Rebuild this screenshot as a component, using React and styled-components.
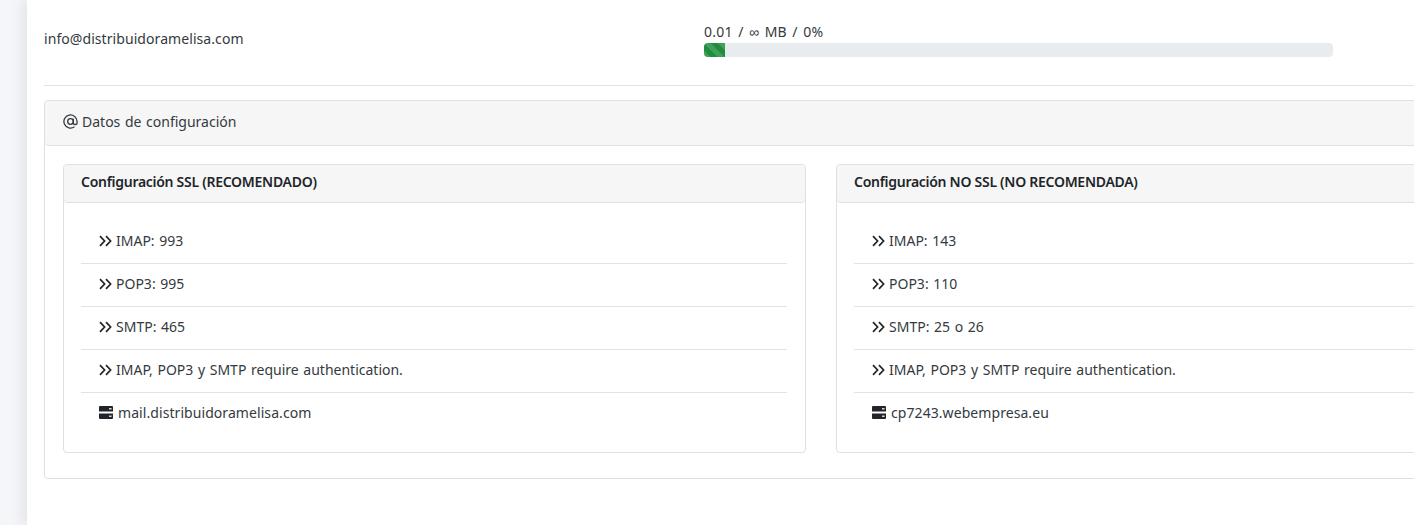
import React from "react";
import styled, { createGlobalStyle } from "styled-components";

const GlobalStyle = createGlobalStyle`
  html, body {
    margin: 0;
    padding: 0;
    height: 100%;
    overflow: hidden;
    background: #f4f5f8;
  }
  * {
    box-sizing: border-box;
  }
`;

const Page = styled.div`
  display: flex;
  width: 1414px;
  height: 525px;
  overflow: hidden;
`;

const Rail = styled.div`
  flex: 0 0 27px;
  background: #f5f6f9;
`;

const Main = styled.main`
  flex: 0 0 1570px;
  height: 525px;
  padding: 0 0 0 17px;
  background: #fff;
  box-shadow: -6px 0 10px rgba(90, 97, 105, 0.1);
  font-family: "Noto Sans", sans-serif;
  font-size: 14px;
  word-spacing: 1px;
  color: #343a40;
`;

const Account = styled.div`
  display: flex;
  height: 86px;
  border-bottom: 1px solid #e3e3e3;
`;

const Address = styled.div`
  flex: 0 0 660px;
  padding-top: 29px;
  line-height: 19px;
  letter-spacing: 0.07px;
`;

const Usage = styled.div`
  width: 629px;
  padding-top: 23px;
`;

const UsageText = styled.div`
  height: 20px;
  line-height: 18px;
  letter-spacing: 0.25px;
  word-spacing: 1.5px;
`;

const Track = styled.div`
  height: 14px;
  border-radius: 4px;
  background: #e9ecef;
  overflow: hidden;
`;

const Fill = styled.div`
  height: 100%;
  background-color: #1e8e3e;
  background-image: linear-gradient(
    45deg,
    rgba(255, 255, 255, 0.15) 25%,
    transparent 25%,
    transparent 50%,
    rgba(255, 255, 255, 0.15) 50%,
    rgba(255, 255, 255, 0.15) 75%,
    transparent 75%,
    transparent
  );
  background-size: 14px 14px;
`;

const Card = styled.section`
  margin-top: 14px;
  height: 379px;
  border: 1px solid #e0e0e0;
  border-radius: 4px;
`;

const CardHeader = styled.header`
  display: flex;
  align-items: center;
  gap: 4px;
  height: 45px;
  padding: 0 18px 3px;
  background: #f6f6f6;
  border-bottom: 1px solid #e0e0e0;
  border-radius: 4px;
`;

const Columns = styled.div`
  display: grid;
  grid-template-columns: 743px 743px;
  gap: 30px;
  padding: 18px;
`;

const Panel = styled.article`
  height: 289px;
  border: 1px solid #e0e0e0;
  border-radius: 4px;
`;

const PanelHeader = styled.h3`
  margin: 0;
  height: 38px;
  padding: 0 17px;
  line-height: 33px;
  font-size: 14px;
  font-weight: 600;
  letter-spacing: -0.28px;
  word-spacing: 0;
  color: #212529;
  background: #f6f6f6;
  border-bottom: 1px solid #e0e0e0;
  border-radius: 4px;
`;

const List = styled.ul`
  margin: 0;
  padding: 18px 18px 0 17px;
  list-style: none;
`;

const Item = styled.li`
  display: flex;
  align-items: center;
  gap: ${(props) => props.$gap}px;
  height: 43px;
  padding: 0 0 3px 18px;
  letter-spacing: ${(props) => (props.$last ? "0.07px" : "0")};
  border-bottom: 1px solid ${(props) => (props.$last ? "transparent" : "#e3e3e3")};
`;

const AtSign = () => (
  <svg width="15" height="15" viewBox="0 0 16 16" fill="none" stroke="#343a40" strokeWidth="1.4">
    <circle cx="8" cy="8" r="3" />
    <path d="M11 5v4.2a2 2 0 0 0 4 0V8a7 7 0 1 0-2.8 5.6" />
  </svg>
);

const DoubleAngle = () => (
  <svg width="13" height="12" viewBox="0 0 13 12" fill="none" stroke="#212529" strokeWidth="1.7">
    <path d="M1 1.2 5.6 6 1 10.8M7 1.2 11.6 6 7 10.8" />
  </svg>
);

const Server = () => (
  <svg width="14" height="13" viewBox="0 0 14 13">
    <path fill="#212529" d="M1 0h12a1 1 0 0 1 1 1v4.5H0V1a1 1 0 0 1 1-1zM0 7.5h14V12a1 1 0 0 1-1 1H1a1 1 0 0 1-1-1z" />
    <rect x="10" y="2.2" width="2.6" height="1.2" fill="#fff" />
    <rect x="10" y="9.6" width="2.6" height="1.2" fill="#fff" />
  </svg>
);

const panels = [
  {
    title: "Configuración SSL (RECOMENDADO)",
    rows: ["IMAP: 993", "POP3: 995", "SMTP: 465", "IMAP, POP3 y SMTP require authentication."],
    host: "mail.distribuidoramelisa.com",
  },
  {
    title: "Configuración NO SSL (NO RECOMENDADA)",
    rows: ["IMAP: 143", "POP3: 110", "SMTP: 25 o 26", "IMAP, POP3 y SMTP require authentication."],
    host: "cp7243.webempresa.eu",
  },
];

export default function App() {
  return (
    <Page>
      <GlobalStyle />
      <Rail />
      <Main>
        <Account>
          <Address>info@distribuidoramelisa.com</Address>
          <Usage>
            <UsageText>0.01 / ∞ MB / 0%</UsageText>
            <Track>
              <Fill style={{ width: "21px" }} />
            </Track>
          </Usage>
        </Account>
        <Card>
          <CardHeader>
            <AtSign />
            Datos de configuración
          </CardHeader>
          <Columns>
            {panels.map((panel) => (
              <Panel key={panel.title}>
                <PanelHeader>{panel.title}</PanelHeader>
                <List>
                  {panel.rows.map((row) => (
                    <Item key={row} $gap={4}>
                      <DoubleAngle />
                      {row}
                    </Item>
                  ))}
                  <Item $last $gap={5}>
                    <Server />
                    {panel.host}
                  </Item>
                </List>
              </Panel>
            ))}
          </Columns>
        </Card>
      </Main>
    </Page>
  );
}
